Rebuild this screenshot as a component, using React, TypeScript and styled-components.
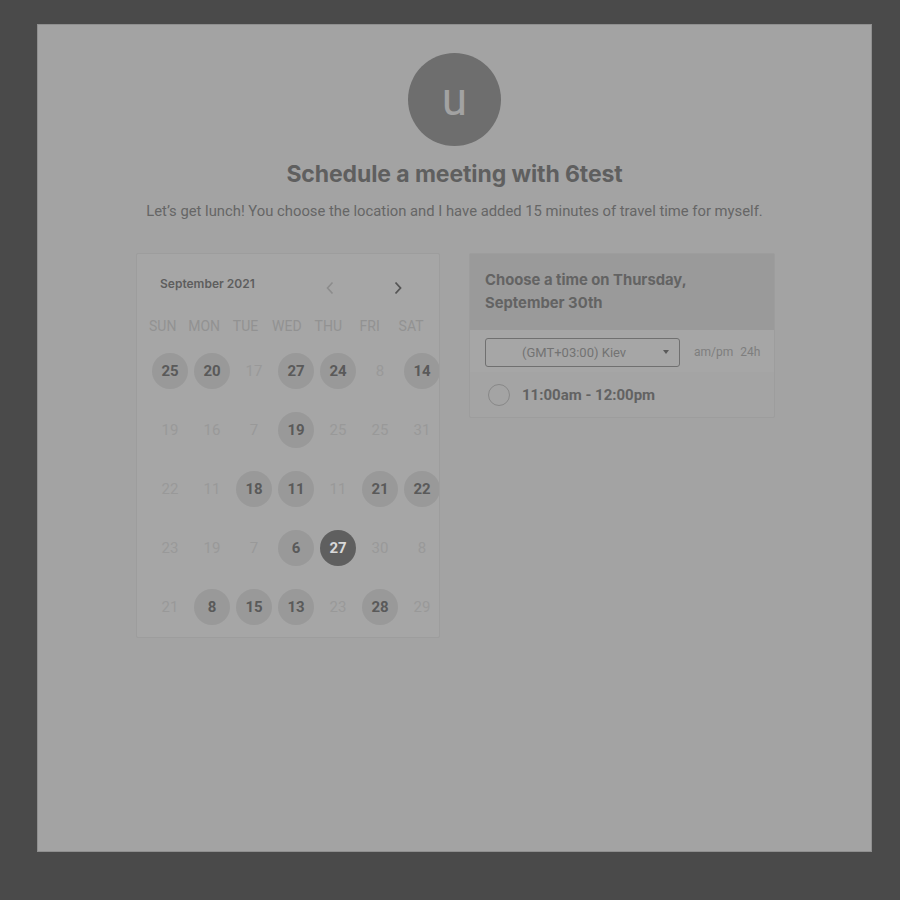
import React from 'react';
import styled, { createGlobalStyle } from 'styled-components';

type Day = { n: number; on?: boolean; sel?: boolean };

const weeks: Day[][] = [
  [{ n: 25, on: true }, { n: 20, on: true }, { n: 17 }, { n: 27, on: true }, { n: 24, on: true }, { n: 8 }, { n: 14, on: true }],
  [{ n: 19 }, { n: 16 }, { n: 7 }, { n: 19, on: true }, { n: 25 }, { n: 25 }, { n: 31 }],
  [{ n: 22 }, { n: 11 }, { n: 18, on: true }, { n: 11, on: true }, { n: 11 }, { n: 21, on: true }, { n: 22, on: true }],
  [{ n: 23 }, { n: 19 }, { n: 7 }, { n: 6, on: true }, { n: 27, sel: true }, { n: 30 }, { n: 8 }],
  [{ n: 21 }, { n: 8, on: true }, { n: 15, on: true }, { n: 13, on: true }, { n: 23 }, { n: 28, on: true }, { n: 29 }],
];

const weekdays = ['SUN', 'MON', 'TUE', 'WED', 'THU', 'FRI', 'SAT'];

const App = () => {
  return (
    <>
      <GlobalStyle />
      <Page>
        <Avatar>u</Avatar>
        <Title>Schedule a meeting with 6test</Title>
        <Subtitle>
          Let’s get lunch! You choose the location and I have added 15 minutes of travel time for myself.
        </Subtitle>
        <Cards>
          <Calendar>
            <CalHeader>
              <span className="month">September 2021</span>
              <Nav>
                <Chevron $dim>
                  <svg width="10" height="14" viewBox="0 0 10 14">
                    <path d="M7.5 1.5 2.5 7l5 5.5" fill="none" stroke="currentColor" strokeWidth="1.6" />
                  </svg>
                </Chevron>
                <Chevron>
                  <svg width="10" height="14" viewBox="0 0 10 14">
                    <path d="M2.5 1.5 7.5 7l-5 5.5" fill="none" stroke="currentColor" strokeWidth="1.8" />
                  </svg>
                </Chevron>
              </Nav>
            </CalHeader>
            <Weekdays>
              {weekdays.map((w) => (
                <li key={w}>{w}</li>
              ))}
            </Weekdays>
            <Days>
              {weeks.flat().map((d, idx) => (
                <DayCell key={idx}>
                  <DayDot $on={d.on} $sel={d.sel}>
                    {d.n}
                  </DayDot>
                </DayCell>
              ))}
            </Days>
          </Calendar>
          <Times>
            <TimesHeader>
              Choose a time on Thursday,
              <br />
              September 30th
            </TimesHeader>
            <ZoneRow>
              <Select>
                <span>(GMT+03:00) Kiev</span>
                <i className="caret" />
              </Select>
              <Formats>
                <span>am/pm</span>
                <span>24h</span>
              </Formats>
            </ZoneRow>
            <Slot>
              <Radio />
              <span>11:00am - 12:00pm</span>
            </Slot>
          </Times>
        </Cards>
      </Page>
    </>
  );
};

export default App;

const GlobalStyle = createGlobalStyle`
  html, body {
    margin: 0;
    background: #4a4a4a;
  }
  body {
    padding: 24px 28px 48px 37px;
    font-family: Roboto, "Liberation Sans", sans-serif;
  }
  ul {
    margin: 0;
    padding: 0;
    list-style: none;
  }
`;

const Page = styled.main`
  width: 833px;
  height: 826px;
  box-sizing: content-box;
  background: #a3a3a3;
  border: 1px solid #8f8f8f;
  display: flex;
  flex-direction: column;
  align-items: center;
`;

const Avatar = styled.div`
  margin-top: 28px;
  width: 93px;
  height: 93px;
  border-radius: 50%;
  background: #6e6e6e;
  color: #a2a2a2;
  font-family: Roboto, sans-serif;
  font-size: 46px;
  display: flex;
  align-items: center;
  justify-content: center;
  line-height: 1;
  padding-bottom: 1px;
  box-sizing: border-box;
`;

const Title = styled.h1`
  margin: 15px 0 0;
  font-family: Inter, sans-serif;
  font-weight: 700;
  font-size: 23px;
  letter-spacing: -0.1px;
  line-height: 26px;
  color: #5f5f5f;
`;

const Subtitle = styled.p`
  margin: 14px 0 0;
  font-size: 14.8px;
  line-height: 21px;
  color: #666666;
`;

const Cards = styled.div`
  margin-top: 31px;
  display: flex;
  align-items: flex-start;
  gap: 29px;
  padding-left: 2px;
`;

const Calendar = styled.section`
  width: 304px;
  height: 385px;
  box-sizing: border-box;
  background: #a6a6a6;
  border: 1px solid #9d9d9d;
  border-radius: 2px;
  overflow: hidden;
`;

const CalHeader = styled.div`
  display: flex;
  align-items: center;
  justify-content: space-between;
  padding: 20px 0 0 23px;
  height: 18px;
  .month {
    font-family: Inter, sans-serif;
    font-weight: 600;
    font-size: 12px;
    color: #5e5e5e;
  }
`;

const Nav = styled.div`
  display: flex;
  gap: 58px;
  margin-right: 36px;
  margin-top: 10px;
`;

const Chevron = styled.span<{ $dim?: boolean }>`
  display: flex;
  color: ${({ $dim }) => ($dim ? '#8c8c8c' : '#555555')};
`;

const Weekdays = styled.ul`
  display: grid;
  grid-template-columns: repeat(7, 41.4px);
  margin: 25px 0 0 5px;
  li {
    text-align: center;
    font-size: 14px;
    line-height: 18px;
    color: #929292;
  }
`;

const Days = styled.div`
  display: grid;
  grid-template-columns: repeat(7, 42px);
  grid-auto-rows: 59px;
  margin: 6px 0 0 12px;
  width: 294px;
`;

const DayCell = styled.div`
  display: flex;
  align-items: center;
  justify-content: center;
`;

const DayDot = styled.span<{ $on?: boolean; $sel?: boolean }>`
  width: 36px;
  height: 36px;
  flex-shrink: 0;
  border-radius: 50%;
  display: flex;
  align-items: center;
  justify-content: center;
  font-size: 15px;
  font-weight: ${({ $on, $sel }) => ($on || $sel ? 700 : 400)};
  color: ${({ $on, $sel }) => ($sel ? '#d9d9d9' : $on ? '#5a5a5a' : '#999999')};
  background: ${({ $on, $sel }) => ($sel ? '#5f5f5f' : $on ? '#999999' : 'transparent')};
`;

const Times = styled.section`
  width: 306px;
  box-sizing: border-box;
  background: #a4a4a4;
  border: 1px solid #9d9d9d;
  border-radius: 2px;
`;

const TimesHeader = styled.h2`
  margin: 0;
  background: #9a9a9a;
  height: 76px;
  box-sizing: border-box;
  padding: 15px 15px 0;
  font-family: Inter, sans-serif;
  font-weight: 700;
  font-size: 14.8px;
  line-height: 23px;
  color: #636363;
`;

const ZoneRow = styled.div`
  display: flex;
  align-items: center;
  height: 42px;
  padding: 2px 0 0 15px;
  box-sizing: border-box;
  background: #a6a6a6;
`;

const Select = styled.div`
  width: 195px;
  height: 29px;
  box-sizing: border-box;
  border: 1px solid #707070;
  border-radius: 3px;
  display: flex;
  align-items: center;
  padding: 0 10px 0 36px;
  font-size: 13px;
  color: #737373;
  span {
    flex: 1;
  }
  .caret {
    width: 0;
    height: 0;
    border-left: 3.5px solid transparent;
    border-right: 3.5px solid transparent;
    border-top: 4px solid #5a5a5a;
  }
`;

const Formats = styled.div`
  display: flex;
  gap: 7px;
  margin-left: 14px;
  font-size: 12px;
  color: #7e7e7e;
`;

const Slot = styled.div`
  display: flex;
  align-items: center;
  gap: 12px;
  height: 45px;
  padding: 1px 0 0 18px;
  box-sizing: border-box;
  font-family: Roboto, sans-serif;
  font-weight: 700;
  font-size: 15px;
  color: #626262;
`;

const Radio = styled.span`
  width: 22px;
  height: 22px;
  box-sizing: border-box;
  border-radius: 50%;
  border: 1.5px solid #888888;
`;
